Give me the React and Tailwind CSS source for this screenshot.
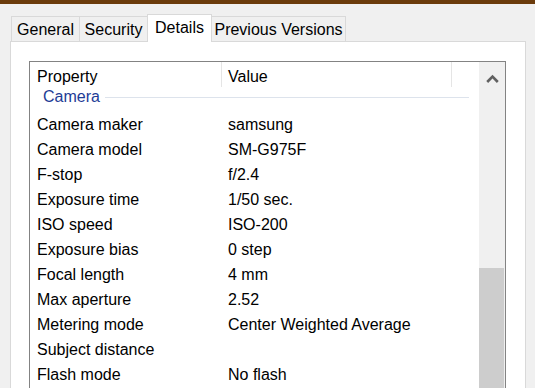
const TABS = [
  { label: "General", w: "w-[69px]" },
  { label: "Security", w: "w-[69px]" },
  { label: "Details", w: "w-[65px]", active: true },
  { label: "Previous Versions", w: "w-[135px]" }
];

const ROWS = [
  ["Camera maker", "samsung"],
  ["Camera model", "SM-G975F"],
  ["F-stop", "f/2.4"],
  ["Exposure time", "1/50 sec."],
  ["ISO speed", "ISO-200"],
  ["Exposure bias", "0 step"],
  ["Focal length", "4 mm"],
  ["Max aperture", "2.52"],
  ["Metering mode", "Center Weighted Average"],
  ["Subject distance", ""],
  ["Flash mode", "No flash"]
];

function Tab({ label, w, active }) {
  if (active) {
    return (
      <div
        className={`${w} relative z-10 -ml-px mb-[-1px] flex h-[28px] items-center justify-center border border-b-0 border-[#d9d9d9] bg-white pb-[2px]`}
      >
        {label}
      </div>
    );
  }
  return (
    <div
      className={`${w} -ml-px flex h-[25px] items-center justify-center border border-b-0 border-[#d9d9d9] bg-[#f0f0f0] pt-px first:ml-0`}
    >
      {label}
    </div>
  );
}

export default function App() {
  return (
    <div
      className="h-[388px] w-[535px] overflow-hidden bg-[#f0f0f0] text-[16px] text-black"
      style={{ fontFamily: '"Liberation Sans", Arial, sans-serif' }}
    >
      <div className="h-[4px] bg-[#6b3b0b]" />

      <div className="flex items-end pl-[11px] pt-[10px]">
        {TABS.map((t) => (
          <Tab key={t.label} {...t} />
        ))}
      </div>

      <div className="ml-[10px] h-[400px] w-[516px] border border-[#d9d9d9] bg-white pl-[18px] pt-[19px]">
        <div className="flex h-[380px] w-[477px] border border-[#838383]">
          <div className="flex-1">
            {/* header */}
            <div className="flex h-[28px] items-center">
              <div className="flex h-[25px] w-[192px] items-center self-start border-r border-[#e5e5e5] pl-[7px] pt-[4px]">
                Property
              </div>
              <div className="flex h-[25px] w-[230px] items-center self-start border-r border-[#e5e5e5] pl-[6px] pt-[4px]">
                Value
              </div>
            </div>

            {/* group */}
            <div className="flex h-[22px] items-center pb-[8px] pl-[13px] pr-[10px]">
              <span className="text-[#1e3c96]">Camera</span>
              <div className="ml-[5px] h-px flex-1 bg-[#dde3ec]" />
            </div>

            {ROWS.map(([k, v]) => (
              <div key={k} className="flex h-[25px] items-center">
                <div className="w-[192px] pl-[7px]">{k}</div>
                <div className="pl-[6px]">{v}</div>
              </div>
            ))}
          </div>

          {/* scrollbar */}
          <div className="flex w-[26px] flex-col bg-[#f0f0f0]">
            <div className="flex h-[32px] items-center justify-center pl-px">
              <svg width="13" height="9" viewBox="0 0 13 9">
                <path d="M1.2 8 L6.5 2.6 L11.8 8" fill="none" stroke="#606060" strokeWidth="2.6" />
              </svg>
            </div>
            <div className="h-[174px]" />
            <div className="mr-px flex-1 bg-[#cdcdcd]" />
          </div>
        </div>
      </div>
    </div>
  );
}
